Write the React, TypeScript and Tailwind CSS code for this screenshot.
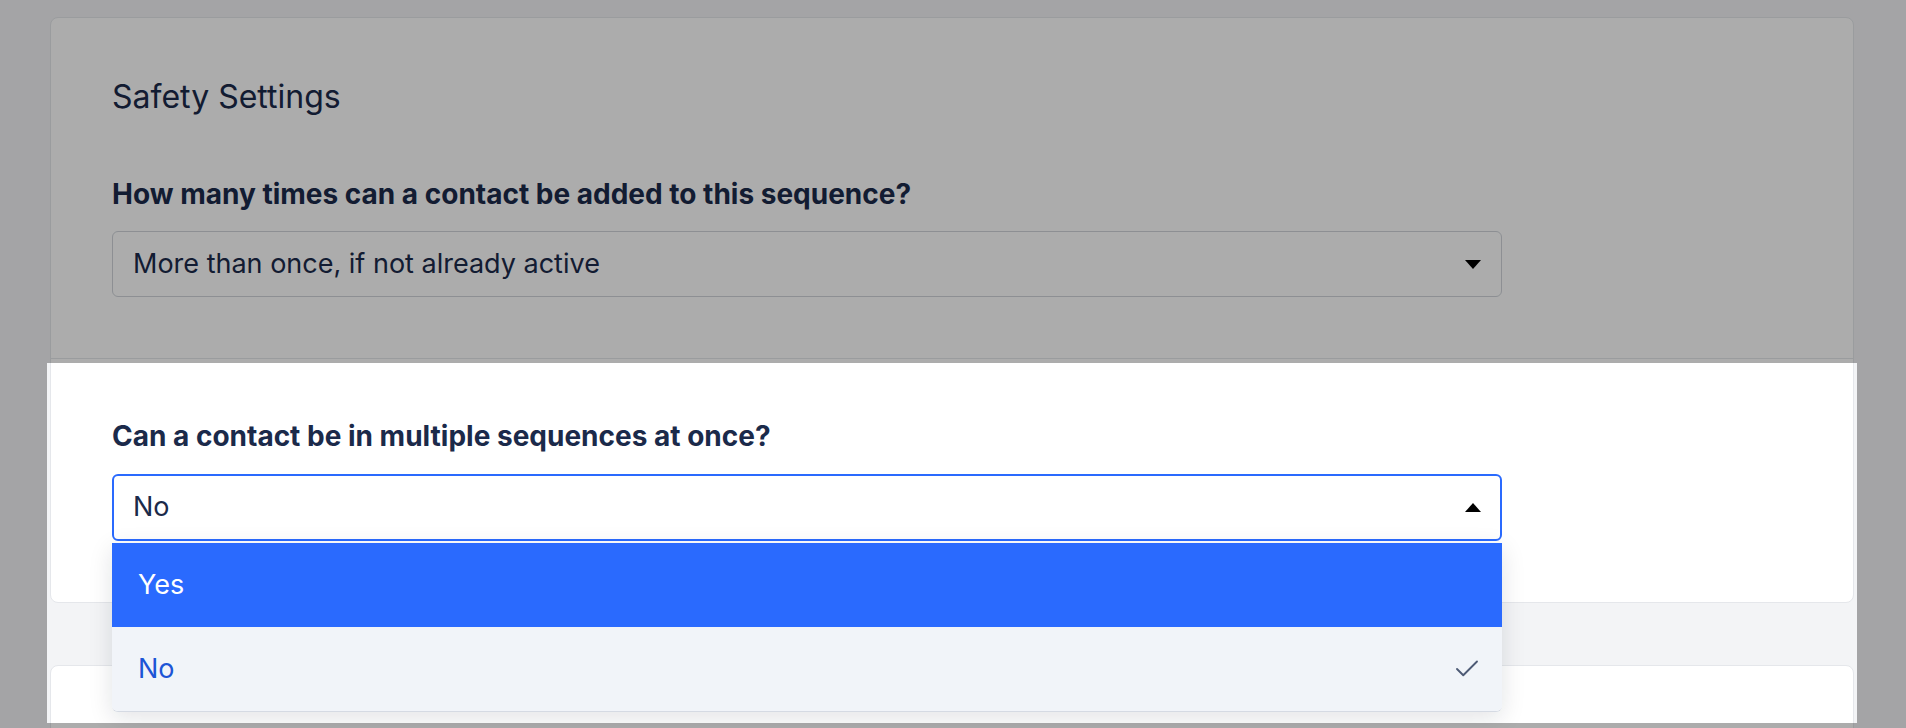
import { Check } from "lucide-react";

function Caret({ up }: { up?: boolean }) {
  return (
    <svg width="16" height="9" viewBox="0 0 16 9" className="shrink-0">
      {up ? <path d="M0 9 L8 0 L16 9 Z" fill="#000" /> : <path d="M0 0 L16 0 L8 9 Z" fill="#000" />}
    </svg>
  );
}

export default function App() {
  return (
    <div
      className="relative min-h-screen overflow-hidden bg-[#f3f4f6] pl-[50px] pr-[52px] pt-[17px] text-[#1b2a4a]"
      style={{ fontFamily: "Inter, 'Noto Sans', sans-serif" }}
    >
      <div className="rounded-lg border border-[#e5e7eb] bg-white">
        <div className="border-b border-[#e5e7eb] px-[61px] pt-[61px] pb-[61px]">
          <h2 className="text-[32px] leading-[36px] font-normal">Safety Settings</h2>
          <p className="mt-[63px] text-[28px] leading-[32px] font-bold">
            How many times can a contact be added to this sequence?
          </p>
          <div className="mt-[21px] flex h-[66px] w-[1390px] items-center justify-between rounded-md border border-[#d1d5db] bg-white pl-[20px] pr-[20px] text-[27px]">
            <span>More than once, if not already active</span>
            <Caret />
          </div>
        </div>

        <div className="px-[61px] pt-[61px] pb-[61px]">
          <p className="text-[28px] leading-[32px] font-bold">Can a contact be in multiple sequences at once?</p>
          <div className="relative mt-[22px] w-[1390px]">
            <div className="flex h-[67px] items-center justify-between rounded-md border-2 border-[#2a6afe] bg-white pl-[19px] pr-[19px] text-[27px]">
              <span>No</span>
              <Caret up />
            </div>
            <ul className="absolute left-0 right-0 top-[69px] z-10 overflow-hidden rounded-b-md border-b border-[#d5dae3] bg-white text-[27px] shadow-[0_6px_24px_rgba(15,23,42,0.12)]">
              <li className="flex h-[84px] items-center bg-[#2a6afe] pl-[26px] text-white">Yes</li>
              <li className="flex h-[84px] items-center justify-between bg-[#f1f4f9] pl-[26px] pr-[20px] text-[#1d55d6]">
                <span>No</span>
                <Check size={30} strokeWidth={1.5} className="text-[#4d5a75]" />
              </li>
            </ul>
          </div>
        </div>
      </div>

      <div className="mt-[62px] h-[200px] rounded-lg border border-[#e5e7eb] bg-white" />

      <div className="pointer-events-none absolute left-[47px] top-[363px] z-20 h-[360px] w-[1810px] shadow-[0_0_0_4000px_rgba(0,0,0,0.325)]" />
    </div>
  );
}
